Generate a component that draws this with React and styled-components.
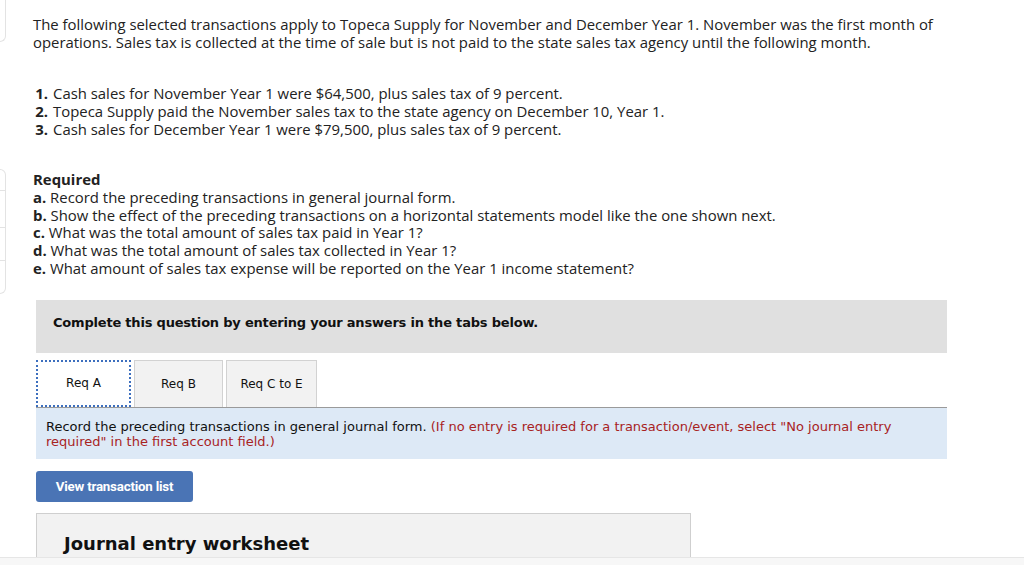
import React from 'react';
import styled, { createGlobalStyle } from 'styled-components';

const Global = createGlobalStyle`
  html, body {
    margin: 0;
    padding: 0;
    background: #f7f7f7;
  }
`;

const Page = styled.div`
  display: flex;
  height: 557px;
  overflow: hidden;
  background: #fff;
  border-bottom: 1px solid #e6e6e6;
`;

const Gutter = styled.div`
  width: 6px;
  flex-shrink: 0;
  display: flex;
  flex-direction: column;
`;

const Stub = styled.div`
  height: ${(p) => p.$h}px;
  border: 1px solid #e3e3e3;
  border-left: none;
  border-top: none;
  border-radius: 0 0 6px 0;
  box-sizing: border-box;
`;

const StubStack = styled.div`
  margin-top: 127px;
  display: flex;
  flex-direction: column;
  border: 1px solid #e3e3e3;
  border-left: none;
  border-radius: 0 6px 6px 0;
`;

const StubCell = styled.div`
  height: ${(p) => p.$h}px;
  border-bottom: 1px solid #e3e3e3;
  &:last-child {
    border-bottom: none;
  }
`;

const Main = styled.div`
  flex: 1;
  padding: 15px 0 0 27px;
  font-family: 'Open Sans', Lato, sans-serif;
  font-size: 14.9px;
  color: #222;
`;

const Para = styled.p`
  margin: 0;
  line-height: 18px;
  width: 940px;
`;

const List = styled.ol`
  margin: 33px 0 0;
  padding: 0;
  list-style: none;
  line-height: 18px;
`;

const Item = styled.li`
  display: flex;
  b {
    width: 20px;
    flex-shrink: 0;
    text-align: right;
    box-sizing: border-box;
    padding-right: 5px;
  }
`;

const Required = styled.div`
  margin-top: 33px;
  line-height: 17.8px;
  h4 {
    margin: 0;
    font-size: 14.9px;
    font-weight: 700;
  }
  p {
    margin: 0;
  }
`;

const Panel = styled.div`
  margin: 22px 0 0 3px;
  width: 911px;
  font-family: 'DejaVu Sans', Verdana, sans-serif;
`;

const Banner = styled.div`
  height: 53px;
  box-sizing: border-box;
  background: #e0e0e0;
  padding: 15px 0 0 17px;
  font-size: 13px;
  line-height: 15px;
  font-weight: 700;
  color: #111;
  letter-spacing: -0.2px;
`;

const TabBar = styled.div`
  margin-top: 7px;
  display: flex;
  gap: 3px;
  border-bottom: 1px solid #9a9a9a;
`;

const Tab = styled.div`
  width: ${(p) => p.$w}px;
  height: 47px;
  box-sizing: border-box;
  display: flex;
  align-items: center;
  justify-content: center;
  font-size: 12px;
  color: #111;
  background: ${(p) => (p.$active ? '#fff' : '#f2f2f2')};
  border: ${(p) => (p.$active ? '2px dotted #3d6fbe' : '1px solid #d2d2d2')};
  border-bottom: ${(p) => (p.$active ? '2px dotted #3d6fbe' : 'none')};
  margin-bottom: ${(p) => (p.$active ? '-1px' : '0')};
  position: relative;
  z-index: ${(p) => (p.$active ? 1 : 0)};
`;

const Info = styled.div`
  background: #dde9f6;
  padding: 11px 10px 10px;
  font-size: 13px;
  line-height: 15px;
  color: #111;
  span {
    color: #a8231f;
  }
`;

const Button = styled.button`
  display: block;
  margin-top: 12px;
  width: 157px;
  height: 31px;
  border: none;
  border-radius: 3px;
  background: #4a74b5;
  color: #fff;
  font-family: Roboto, 'Liberation Sans', sans-serif;
  font-weight: 700;
  font-size: 13.3px;
  letter-spacing: -0.2px;
  cursor: pointer;
`;

const Worksheet = styled.div`
  margin-top: 11px;
  width: 655px;
  height: 80px;
  box-sizing: border-box;
  background: #f2f2f2;
  border: 1px solid #cfcfcf;
  padding: 19px 0 0 27px;
  h3 {
    margin: 0;
    font-family: 'DejaVu Sans', Verdana, sans-serif;
    font-size: 18px;
    font-weight: 700;
    color: #111;
  }
`;

export default function App() {
  return (
    <>
      <Global />
      <Page>
        <Gutter>
          <Stub $h={42} />
          <StubStack>
            <StubCell $h={20} />
            <StubCell $h={36} />
            <StubCell $h={32} />
            <StubCell $h={32} />
          </StubStack>
        </Gutter>
        <Main>
          <Para>
            The following selected transactions apply to Topeca Supply for November and December Year 1. November was the first month of
            operations. Sales tax is collected at the time of sale but is not paid to the state sales tax agency until the following month.
          </Para>
          <List>
            <Item><b>1.</b>Cash sales for November Year 1 were $64,500, plus sales tax of 9 percent.</Item>
            <Item><b>2.</b>Topeca Supply paid the November sales tax to the state agency on December 10, Year 1.</Item>
            <Item><b>3.</b>Cash sales for December Year 1 were $79,500, plus sales tax of 9 percent.</Item>
          </List>
          <Required>
            <h4>Required</h4>
            <p><b>a.</b> Record the preceding transactions in general journal form.</p>
            <p><b>b.</b> Show the effect of the preceding transactions on a horizontal statements model like the one shown next.</p>
            <p><b>c.</b> What was the total amount of sales tax paid in Year 1?</p>
            <p><b>d.</b> What was the total amount of sales tax collected in Year 1?</p>
            <p><b>e.</b> What amount of sales tax expense will be reported on the Year 1 income statement?</p>
          </Required>
          <Panel>
            <Banner>Complete this question by entering your answers in the tabs below.</Banner>
            <TabBar>
              <Tab $w={95} $active>Req A</Tab>
              <Tab $w={89}>Req B</Tab>
              <Tab $w={91}>Req C to E</Tab>
            </TabBar>
            <Info>
              Record the preceding transactions in general journal form.{' '}
              <span>(If no entry is required for a transaction/event, select "No journal entry required" in the first account field.)</span>
            </Info>
            <Button>View transaction list</Button>
            <Worksheet>
              <h3>Journal entry worksheet</h3>
            </Worksheet>
          </Panel>
        </Main>
      </Page>
    </>
  );
}
